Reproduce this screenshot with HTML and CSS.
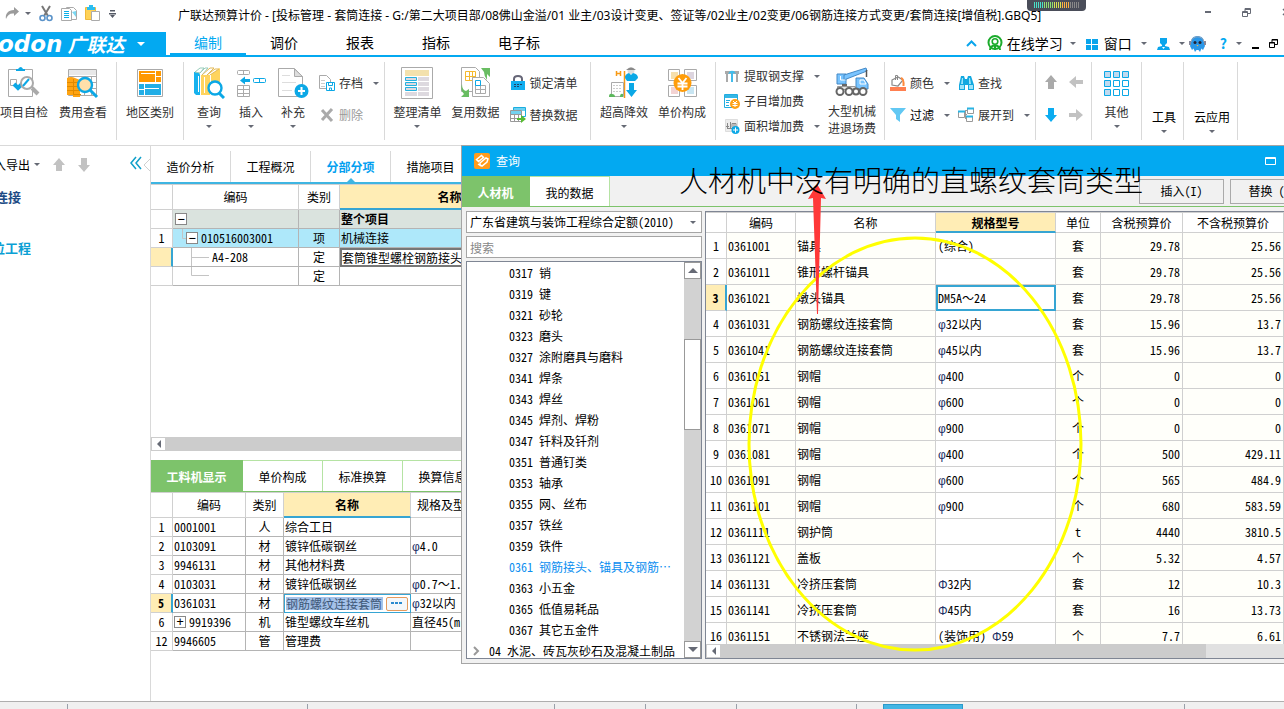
FILE: index.html
```html
<!DOCTYPE html>
<html lang="zh-CN">
<head>
<meta charset="utf-8">
<title>广联达预算计价</title>
<link rel="stylesheet" href="styles.css">
</head>
<body>
<div class="app">
<header class="titlebar">
  <div class="quick">
    <button class="icon-btn" aria-label="重做"><svg width="15" height="13" viewBox="0 0 15 13"><path d="M9 0l5 4.500-5 4.500V6.500C5 6 2.500 8 1 12 0 7 3 3 9 3z" fill="#9b9b9b"/></svg></button>
    <span class="caret"></span>
    <button class="icon-btn" aria-label="剪切"><svg width="14" height="17" viewBox="0 0 14 17" fill="none"><path d="M3 1l6 10M11 1L5 11" stroke="#777" stroke-width="2"/><circle cx="3.500" cy="13" r="2.500" stroke="#5b93c9" stroke-width="1.600"/><circle cx="10.500" cy="13" r="2.500" stroke="#5b93c9" stroke-width="1.600"/></svg></button>
    <button class="icon-btn" aria-label="复制"><svg width="16" height="16" viewBox="0 0 16 16" fill="none"><path d="M5.500 1.500h7l3 3v9h-10z" fill="#fff" stroke="#aaa"/><path d="M11 6l4 5V5z" fill="#7bd8f2"/><path d="M.5 2.500h8l2 2v10H.5z" fill="#fff" stroke="#aaa"/><path d="M3 5.500h5M3 7.500h5M3 9.500h5M3 11.500h5" stroke="#0bb0e8"/></svg></button>
    <button class="icon-btn" aria-label="粘贴"><svg width="16" height="17" viewBox="0 0 16 17"><path d="M.5 2.500h10v12H.5z" fill="#ffd257" stroke="#f0b93a"/><path d="M2 2h2V0h4v2h2v3H2z" fill="#2bbdf0"/><path d="M6.500 6.500h8v9h-8z" fill="#fff" stroke="#aaa"/></svg></button>
    <button class="icon-btn" aria-label="自定义"><svg width="7" height="8" viewBox="0 0 7 8"><path d="M1 0h5v1.500H1zM0 3h7v1.500H0zM1 5h5L3.500 8z" fill="#555a66"/></svg></button>
  </div>
  <h1 class="title">广联达预算计价 - [投标管理 - 套筒连接 - G:/第二大项目部/08佛山金溢/01 业主/03设计变更、签证等/02业主/02变更/06钢筋连接方式变更/套筒连接[增值税].GBQ5]</h1>
  <div class="win-controls">
    <button class="icon-btn" aria-label="最小化"><svg width="6" height="2"><path d="M0 0h6v2H0z" fill="#666a75"/></svg></button>
    <button class="icon-btn" aria-label="还原"><svg width="9" height="9" fill="none" stroke="#666a75"><path d="M.5 3.500h5v5h-5zM.5 4.500h5M3 3V.5h5.500v5H6M3 1.500h5"/></svg></button>
    <button class="icon-btn" aria-label="关闭"><svg width="8" height="8" fill="none" stroke="#666a75" stroke-width="1.500"><path d="M1 1l6 6M7 1L1 7"/></svg></button>
  </div>
  <div class="recorder"><svg width="46" height="6" fill="none" stroke-width="6" stroke-dasharray="1 1"><path d="M0 3h10" stroke="#48e0c8"/><path d="M10 3h10" stroke="#8fe070"/><path d="M20 3h8" stroke="#d8e050"/><path d="M28 3h8" stroke="#ffb040"/><path d="M36 3h10" stroke="#888"/></svg></div>
</header>

<nav class="menubar">
  <button class="logo"><span class="logo-en">odon</span><span class="logo-cn">广联达</span><span class="caret caret-light"></span></button>
  <a class="menu active" href="#">编制</a><a class="menu" href="#">调价</a><a class="menu" href="#">报表</a><a class="menu" href="#">指标</a><a class="menu menu-wide" href="#">电子标</a>
  <div class="menu-tools">
    <button class="icon-btn" aria-label="收起"><svg width="11" height="7" fill="none" stroke="#0aa5ec" stroke-width="2"><path d="M1 6l4.500-4.500L10 6"/></svg></button>
    <button class="tool online"><svg width="16" height="17" viewBox="0 0 16 17" fill="none" stroke="#1bab2c"><circle cx="8" cy="7.500" r="6.500" stroke-width="2"/><circle cx="8" cy="6.500" r="2.800" stroke-width="1.600"/><path d="M3 15c0-6 10-6 10 0M8 11v4" stroke-width="2"/></svg>在线学习<span class="caret"></span></button>
    <button class="tool"><svg width="12" height="12" fill="#0aa5ec"><path d="M0 1h5v5H0zM6 1h6v5H6zM0 7h5v5H0zM6 7h6v5H6z"/></svg>窗口<span class="caret"></span></button>
    <button class="tool" aria-label="用户"><svg width="13" height="12" viewBox="0 0 13 12" fill="#0aa5ec"><path d="M3 0h7v5L8 7v1l4 1 1 3H0l1-3 4-1V7L3 5z"/><path d="M5 9l1.500 2L8 9z" fill="#fff"/></svg><span class="caret"></span></button>
    <button class="icon-btn helper" aria-label="助手"><svg width="17" height="16" viewBox="0 0 17 16"><path d="M2 6C2-2 15-2 15 6l1 4-2 4-1.500-1.500L11 16l-1.500-2h-2L6 16l-1.500-3.500L3 14l-2-4z" fill="#2a97e8"/><path d="M2 6C3-1 14-1 15 6" fill="none" stroke="#99a4b5"/><path d="M0 5h2v4H0zM15 5h2v4h-2z" fill="#889"/><circle cx="6" cy="6.500" r="1.500" fill="#223"/><circle cx="11" cy="6.500" r="1.500" fill="#223"/><path d="M7.500 9h2l-1 1.500z" fill="#fb4"/></svg></button>
    <button class="tool help">?<span class="caret"></span></button>
    <button class="icon-btn low" aria-label="最小化文档"><svg width="7" height="2"><path d="M0 0h7v2H0z"/></svg></button>
    <button class="icon-btn" aria-label="还原文档"><svg width="9" height="9" fill="none" stroke="#000"><path d="M.5 3.500h5v5h-5zM0 4h6M3 3V.5h5.500v5H6M3 1h6"/></svg></button>
  </div>
</nav>

<section class="ribbon" aria-label="工具栏">
  <div class="group g-check">
    <button class="big"><svg width="32" height="32" viewBox="0 0 32 32" fill="none"><path d="M0.500 2.500h24v27h-24z" fill="#fff" stroke="#aaa"/><path d="M8 4V2h2q3-4 5 0h2v2z" fill="#0ba8e6"/><path d="M2.500 12.500h6v6h-6z" stroke="#aaa"/><path d="M6 17l4 4 5-5" stroke="#0ba8e6" stroke-width="4"/><circle cx="19" cy="16" r="6" stroke="#aaa" stroke-width="2" fill="#fff"/><path d="M15 19l6-7" stroke="#0ba8e6" stroke-width="2"/><path d="M24 21l6 6" stroke="#aaa" stroke-width="4"/></svg>项目自检</button>
    <button class="big"><svg width="32" height="32" viewBox="0 0 32 32" fill="none"><path d="M1.500 2.500h28v26h-28zM2 9.500h28M2 15.500h28M2 21.500h28M17.500 10v18M24.500 10v18" stroke="#aaa" fill="#fff"/><path d="M2 3h27v5H2z" fill="#e8e8e8"/><path d="M0 11q4-2 8 0l5 2v17H6v-2H0z" fill="#ffa412"/><path d="M0 15.500h12M0 19.500h12M0 23.500h12M6 27.500h8M6.500 12v15" stroke="#e08a00"/><circle cx="18" cy="18" r="7" fill="#ffe0aa" stroke="#0ba8e6" stroke-width="2.400"/><path d="M23 23l7 7" stroke="#0ba8e6" stroke-width="3"/></svg>费用查看</button>
  </div>
  <div class="group g-area">
    <button class="big"><svg width="32" height="32" viewBox="0 0 32 32" fill="none"><path d="M3.500 2.500h25v27h-25z" stroke="#aaa"/><path d="M5 4h22v11H5z" fill="#ff9800"/><path d="M7 6.500h14M21.500 4v11M22 9.500h5" stroke="#fff"/><path d="M5 17h22v11H5z" fill="#22aee6"/><path d="M10 21.500h15M10.500 17v11M5 22.500h5" stroke="#fff"/></svg>地区类别</button>
  </div>
  <div class="group g-edit">
    <button class="big"><svg width="32" height="32" viewBox="0 0 32 32" fill="none"><path d="M1 4l4-3h13v20l-4 7H1z" fill="#fff"/><path d="M1 5h6v23H3l-2-2z" fill="#17b2ee"/><path d="M2 5l5-4h4L7 6zM6 7l6-6h3L9 8" fill="#fff" stroke="#9cb" /><path d="M8 8h9l10-7v21l-10 6H8z" fill="#ffd45e"/><path d="M9 8l8-7h4l-7 7M14 8l8-6h4l-9 6" fill="#fff" stroke="#e3b956"/><path d="M5.500 9v16M11.500 10v16M17.500 8v20" stroke="#fff"/><circle cx="22" cy="21" r="6.500" stroke="#0ba8e6" stroke-width="2.400" fill="#fff"/><path d="M26 26l5 5" stroke="#0ba8e6" stroke-width="3"/></svg>查询<span class="caret"></span></button>
    <button class="big"><svg width="32" height="32" viewBox="0 0 32 32" fill="none" stroke="#aaa"><rect x="2.500" y="3.500" width="12" height="4" rx="1"/><path d="M8.500 3v5"/><path d="M2.500 18.500h12v11h-12zM2 22.500h13M2 26.500h13M8.500 18v12"/><rect x="18.500" y="11.500" width="12" height="4" rx="1" stroke="#0ba8e6"/><path d="M24.500 11v5" stroke="#0ba8e6"/><path d="M5 13.500l5-4v2.500h5v3h-5v2.500z" fill="#0ba8e6" stroke="none"/></svg>插入<span class="caret"></span></button>
    <button class="big"><svg width="32" height="32" viewBox="0 0 32 32" fill="none"><path d="M1.500 1.500h16l8 8v20h-24z" fill="#fff" stroke="#aaa"/><path d="M17.500 2v7.500h8z" fill="#ddd" stroke="#aaa"/><path d="M5 8.500h8M5 15.500h14M5 23.500h10" stroke="#ddd"/><circle cx="24.500" cy="24" r="7" fill="#0ba8e6"/><path d="M21 24h7M24.500 20v8" stroke="#fff" stroke-width="2"/></svg>补充<span class="caret"></span></button>
    <div class="stack">
      <button class="small"><svg width="16" height="16" viewBox="0 0 16 16" fill="none"><path d="M.5.5h7l4 4v9H.5z" stroke="#aaa"/><path d="M2 5.500h4M2 8.500h4M2 11.500h4" stroke="#ccc"/><path d="M7.500 7.500h8v8h-8z" fill="#fff" stroke="#0ba8e6"/><path d="M9.500 8v2.500h4V8M10.500 15v-2h2v2" stroke="#0ba8e6"/></svg>存档<span class="caret"></span></button>
      <button class="small muted"><svg width="16" height="16" viewBox="0 0 16 16" fill="none" stroke="#aaa" stroke-width="3"><path d="M3 3l10 11M13 2L3 13"/></svg>删除</button>
    </div>
  </div>
  <div class="group g-data">
    <button class="big"><svg width="32" height="32" viewBox="0 0 32 32" fill="none"><path d="M.5.5h31v31H.5z" stroke="#aaa"/><path d="M4 3h24v6H4z" fill="#f3e1ad"/><path d="M17 10h11v4H17zM17 15h11v4H17zM17 20h11v4H17zM17 25h11v4H17z" fill="#ddd9df"/><path d="M4.500 10.500h11v3h-11zM4.500 15.500h11v3h-11zM4.500 20.500h11v3h-11z" stroke="#25b1df" fill="#ddd9df"/><path d="M4 25h12v4H4z" fill="#ddd9df"/></svg>整理清单<span class="caret"></span></button>
    <button class="big"><svg width="32" height="32" viewBox="0 0 32 32" fill="none"><path d="M2.500.5h14l4 4v20h-18z" stroke="#aaa" fill="#fff"/><path d="M6.500 4.500h10v9h-10zM6 9.500h11M10.500 4v9M13.500 4v9" stroke="#f5b92e"/><path d="M13.500 10.500h11l6 6v13h-17z" fill="#fff" stroke="#aaa"/><path d="M16.500 18.500h10v8h-10zM21.500 14v12M16 22.500h11" stroke="#aaa"/><path d="M16.500 13.500h5v5h-5z" stroke="#0ba8e6"/><path d="M22 1h9v9l-3-3v6q-3-4-3-8z" fill="#69bd62"/><path d="M3 17q0 6 4 7l3-2v8H2l3-3q-4-4-2-10z" fill="#69bd62"/></svg>复用数据</button>
    <div class="stack">
      <button class="small"><svg width="16" height="16" viewBox="0 0 16 16" fill="none"><path d="M4 7V4q0-3 4-3t4 3v3" stroke="#667" stroke-width="2"/><path d="M1 6h14v9H1z" fill="#11aef0"/><path d="M4 9h2v1H4zM7 9h2v1H7zM10 9h2v1h-2zM4 11h2v1H4zM7 11h2v1H7z" fill="#246"/></svg>锁定清单</button>
      <button class="small"><svg width="16" height="16" viewBox="0 0 16 16" fill="none"><path d="M3.500.5h12v9h-12z" fill="#fff" stroke="#1badde"/><path d="M4 1h11v3H4z" fill="#6bd1f2"/><path d="M.5 3.500h11v11H.5z" fill="#fff" stroke="#999"/><path d="M0 7.500h12M0 11.500h12M4.500 4v11M8.500 4v11" stroke="#999"/><path d="M1 4h10v3H1z" fill="#74d3f0"/><path d="M7 11h4V8l5 4-5 4v-3H7z" fill="#58bb33"/></svg>替换数据</button>
    </div>
  </div>
  <div class="group g-price">
    <button class="big"><svg width="32" height="32" viewBox="0 0 32 32" fill="none"><path d="M8.500 4v5M12.500 4v5M8 6.500h4M16.500 4v27M16 9.500h4" stroke="#f79a16" stroke-width="1.500"/><path d="M3.500 15.500h12v14h-12z" stroke="#aaa"/><path d="M5 18.500h9M5 21.500h9M5 24.500h9" stroke="#ccc" stroke-dasharray="2 1"/><path d="M1 30q0-4 3-3 3 0 3 3zM12 30q0-4 3-3v3z" fill="#5cb85c"/><circle cx="23" cy="3.500" r="3.500" fill="#ddd"/><path d="M18 3q5-5 10 0z" fill="#888"/><path d="M17 11q0-4 4-5l2 2 2-2q5 1 5 5l-3 3h-8z" fill="#0ba8e6"/><path d="M21 16h5v7h3l-5.500 7-5.500-7h3z" fill="#0ba8e6"/></svg>超高降效<span class="caret"></span></button>
    <button class="big"><svg width="32" height="32" viewBox="0 0 32 32" fill="none" stroke="#aaa"><path d="M2.500 2.500h11v11h-11zM18.500 2.500h12v11h-12zM2.500 18.500h11v11h-11zM18.500 18.500h12v11h-12z"/><g stroke="none"><path d="M5 5h7v7H5z" fill="#f6dfac"/><path d="M21 5h7v7h-7z" fill="#ddd5df"/><path d="M5 20h7v7H5z" fill="#f3d3d3"/><path d="M21 20h7v7h-7z" fill="#c8e5f2"/><circle cx="16.500" cy="16" r="9" fill="#ff9d0a"/></g><path d="M12.500 11l4 5 4-5M11.500 16.500h10M11.500 19.500h10M16.500 16v7" stroke="#fff" stroke-width="1.800"/></svg>单价构成</button>
  </div>
  <div class="group g-fee">
    <div class="stack tight">
      <button class="small"><svg width="16" height="16" viewBox="0 0 16 16"><path d="M1 3h14v3H1zM2 6h2v8H2zM12 6h2v8h-2z" fill="#aaa"/><path d="M4 6q2-4 4-3 2-1 4 3l-3-1v9H7V5z" fill="#42bceb"/></svg>提取钢支撑<span class="caret"></span></button>
      <button class="small"><svg width="16" height="16" viewBox="0 0 16 16" fill="none"><path d="M.5 1.500h13v13H.5z" fill="#fff" stroke="#22ade0"/><path d="M1 2h12v3H1z" fill="#35b7e5"/><path d="M2 7.500h4M2 9.500h3M2 12.500h3" stroke="#22ade0"/><circle cx="11" cy="11" r="5" fill="#ffa217"/><path d="M9 8l2 2 2-2M8.500 10.500h5M8.500 12.500h5M11 10v4" stroke="#fff"/></svg>子目增加费</button>
      <button class="small"><svg width="16" height="16" viewBox="0 0 16 16" fill="none"><path d="M1.500 1.500h12v12h-12z" fill="#ececec" stroke="#ddd"/><path d="M2 8.500h3M3.500 5v5M6.500 4v7M8 5.500h4v4H8zM10 5v5M3 10.500h8" stroke="#888"/><circle cx="11.500" cy="12" r="4" fill="#0ba8e6"/><path d="M9 12h5M11.500 9.500v5" stroke="#fff"/></svg>面积增加费<span class="caret"></span></button>
    </div>
    <button class="big tall"><svg width="34" height="32" viewBox="0 0 34 32" fill="none"><path d="M2 7h9v10H2zM21 11h8l4 6v5H21z" fill="#79c4ff" stroke="#4489c6"/><path d="M9 8l22-7 1 3-18 7-5 2z" fill="#79c4ff" stroke="#4489c6"/><path d="M5.500 9v4h5M25 13h4l2 4h-6z" stroke="#fff"/><path d="M31.500 3v7" stroke="#555" stroke-width="1.500"/><path d="M7 17h5v2H7z" fill="#666"/><path d="M2.500 19.500h18v3h-18z" fill="#e5e5e5" stroke="#999"/><g fill="#fff" stroke="#666" stroke-width="2"><circle cx="5" cy="24.500" r="3.500"/><circle cx="14" cy="24.500" r="3.500"/><circle cx="21" cy="24.500" r="3"/><circle cx="28" cy="24.500" r="3.500"/></g></svg>大型机械<br>进退场费</button>
  </div>
  <div class="group g-view">
    <div class="stack">
      <button class="small"><svg width="16" height="16" viewBox="0 0 16 16" fill="none"><path d="M2 5l6-3 5 3-5 6-6-1z" fill="#fff" stroke="#888" stroke-width="1.200"/><path d="M5.500 5V.5h2V5" stroke="#888"/><path d="M11 3q3 1 2.500 8" stroke="#ff8a3c" stroke-width="2"/><path d="M0 12h16v4H0z" fill="#ff7f50"/></svg>颜色<span class="caret"></span></button>
      <button class="small dark"><svg width="16" height="16" viewBox="0 0 16 16"><path d="M0 1h16L10 8v7l-4-3V8z" fill="#62c8f3"/></svg>过滤<span class="caret"></span></button>
    </div>
    <div class="stack">
      <button class="small"><svg width="16" height="16" viewBox="0 0 16 16"><path d="M3 1h3l1 3h2l1-3h3l3 9v5h-6v-5H7v5H1v-5z" fill="#11a8e0"/><path d="M2 10h4v4H2zM11 10h4v4h-4zM4 3h1v6H3zM11 3h1l1 6h-2z" fill="#9be3fa"/></svg>查找</button>
      <button class="small"><svg width="16" height="16" viewBox="0 0 16 16" fill="#fff" stroke="#999"><path d="M6 7.500h3M7.500 3v9M8 3.500h2M8 12.500h2" fill="none"/><path d="M.5 4.500h6v6h-6zM9.500 1.500h6v5h-6zM8.500 9.500h6v5h-6z"/><path d="M0 4.500h7M9 1.500h7M8 9.500h7" stroke="#28b4e4" stroke-width="2"/></svg>展开到<span class="caret"></span></button>
    </div>
  </div>
  <div class="group g-move">
    <button class="icon-btn" aria-label="上移"><svg width="14" height="16"><path d="M7 1l6 7H10v7H4V8H1z" fill="#aaa"/></svg></button>
    <button class="icon-btn" aria-label="左移"><svg width="16" height="14"><path d="M1 7l7-6v4h7v4H8v4z" fill="#c2c2c2"/></svg></button>
    <button class="icon-btn" aria-label="下移"><svg width="14" height="16"><path d="M7 15L1 8h3V1h6v7h3z" fill="#0bacf0"/></svg></button>
    <button class="icon-btn" aria-label="右移"><svg width="16" height="14"><path d="M15 7L8 1v4H1v4h7v4z" fill="#c2c2c2"/></svg></button>
  </div>
  <div class="group g-other">
    <button class="big"><svg width="32" height="32" viewBox="0 0 32 32" fill="#fff" stroke="#0ba8e6"><g fill="#c0daef"><path d="M3.500 4.500h6v6h-6zM12.500 4.500h6v6h-6zM21.500 4.500h6v6h-6zM3.500 13.500h6v6h-6zM3.500 22.500h6v6h-6z"/></g><path d="M12.500 13.500h6v6h-6zM21.500 13.500h6v6h-6zM12.500 22.500h6v6h-6zM21.500 22.500h6v6h-6z"/></svg>其他<span class="caret"></span></button>
  </div>
  <div class="group g-tool"><button class="big">工具<span class="caret"></span></button></div>
  <div class="group g-cloud"><button class="big">云应用<span class="caret"></span></button></div>
</section>

<main class="workspace">
  <aside class="side">
    <div class="side-tools">
      <button class="clip-text">入导出</button><span class="caret"></span>
      <button class="icon-btn" aria-label="上移"><svg width="12" height="14"><path d="M6 0l6 7H9v6H3V7H0z" fill="#c2c2c2"/></svg></button>
      <button class="icon-btn" aria-label="下移"><svg width="12" height="14"><path d="M6 14L0 7h3V0h6v7h3z" fill="#c2c2c2"/></svg></button>
      <button class="icon-btn collapse" aria-label="折叠"><svg width="12" height="14" fill="none" stroke="#109fc9" stroke-width="1.500"><path d="M6 1L1 7l5 6M11 1L6 7l5 6"/></svg></button>
      <svg width="7" height="14" fill="#fff" stroke="#d0d0d0"><path d="M7 1L1 7l6 6"/></svg>
    </div>
    <a class="side-link" href="#">连接</a>
    <a class="side-link unit" href="#">位工程</a>
  </aside>
  <section class="center">
    <nav class="tabs">
      <button class="tab">造价分析</button><button class="tab">工程概况</button><button class="tab on">分部分项</button><button class="tab">措施项目</button>
    </nav>
    <table class="grid items">
      <colgroup><col class="w22"><col class="w126"><col class="w41"><col class="w220"><col></colgroup>
      <thead><tr><th></th><th>编码</th><th>类别</th><th class="hot">名称</th><th></th></tr></thead>
      <tbody>
        <tr class="root"><td></td><td><div class="node"><button class="toggle lv0" aria-label="折叠">−</button></div></td><td></td><td><b>整个项目</b></td><td></td></tr>
        <tr class="picked"><td class="c">1</td><td><div class="node"><svg width="13" height="18" fill="none" stroke="#c4c4c4"><path d="M9.500 0v9.500H13"/></svg><button class="toggle" aria-label="折叠">−</button><span>010516003001</span></div></td><td class="c">项</td><td>机械连接</td><td></td></tr>
        <tr><td class="mark"></td><td><div class="node"><svg width="36" height="19" fill="none" stroke="#c4c4c4"><path d="M18.500 0v19M18 9.500h18"/></svg><span>A4-208</span></div></td><td class="c">定</td><td class="focus">套筒锥型螺栓钢筋接头</td><td></td></tr>
        <tr><td></td><td><div class="node"><svg width="38" height="19" fill="none" stroke="#c4c4c4"><path d="M18.500 0v8.500H36"/></svg></div></td><td class="c">定</td><td></td><td></td></tr>
      </tbody>
    </table>
    <div class="hscroll main-scroll"><button class="arrow left" aria-label="向左"></button><div class="thumb"></div></div>
    <nav class="tabs green">
      <button class="tab on">工料机显示</button><button class="tab">单价构成</button><button class="tab">标准换算</button><button class="tab">换算信息</button>
    </nav>
    <table class="grid parts">
      <colgroup><col class="w22"><col class="w73"><col class="w38"><col class="w127"><col class="w73"><col></colgroup>
      <thead><tr><th></th><th>编码</th><th>类别</th><th class="hot">名称</th><th>规格及型号</th><th></th></tr></thead>
      <tbody>
        <tr><td class="c">1</td><td>0001001</td><td class="c">人</td><td>综合工日</td><td></td><td></td></tr>
        <tr><td class="c">2</td><td>0103091</td><td class="c">材</td><td>镀锌低碳钢丝</td><td><i>φ</i>4.0</td><td></td></tr>
        <tr><td class="c">3</td><td>9946131</td><td class="c">材</td><td>其他材料费</td><td></td><td></td></tr>
        <tr><td class="c">4</td><td>0103031</td><td class="c">材</td><td>镀锌低碳钢丝</td><td><i>φ</i>0.7～1.</td><td></td></tr>
        <tr><td class="mark c">5</td><td>0361031</td><td class="c">材</td><td class="editing"><div class="editor"><input value="钢筋螺纹连接套筒" aria-label="名称"><button aria-label="选择"><svg width="12" height="3" fill="#2a8ad0"><path d="M0 0h3v2H0zM4 0h3v2H4zM8 0h3v2H8z"/></svg></button></div></td><td><i>φ</i>32以内</td><td></td></tr>
        <tr><td class="c">6</td><td><div class="node"><button class="toggle" aria-label="展开">+</button><span>9919396</span></div></td><td class="c">机</td><td>锥型螺纹车丝机</td><td>直径45(m</td><td></td></tr>
        <tr><td class="c">12</td><td>9946605</td><td class="c">管</td><td>管理费</td><td></td><td></td></tr>
      </tbody>
    </table>
  </section>
</main>
<footer class="status"><span class="s1"></span><span class="s2"></span><span class="s3"></span><span class="s4"></span><span class="s4"></span><span class="s5"></span><button aria-label="当前视图"></button><span class="s6"></span></footer>

<section class="dialog" role="dialog" aria-label="查询">
  <header class="dialog-title"><svg width="16" height="16" viewBox="0 0 16 16" fill="none"><rect width="16" height="16" rx="2" fill="#ff9c1c"/><path d="M2.500 6.500l5-4 2 2-5 4zM6 10l6-5 2 1-1 3-5 4-2-1zM4 11l3 2" stroke="#fff" stroke-width="1.500"/></svg><h2>查询</h2><button class="icon-btn" aria-label="最大化"><svg width="11" height="8" fill="none" stroke="#fff"><path d="M.5.5h10v7H.5zM0 1.500h11"/></svg></button></header>
  <div class="dialog-bar">
    <nav class="tabs green"><button class="tab on">人材机</button><button class="tab">我的数据</button></nav>
    <button class="push">插入(I)</button><button class="push">替换 (R)</button>
  </div>
  <div class="dialog-body">
    <div class="finder">
      <div class="combo"><select aria-label="定额库"><option>广东省建筑与装饰工程综合定额(2010)</option></select><span class="caret"></span></div>
      <input class="search" placeholder="搜索" aria-label="搜索">
      <div class="tree">
        <ul>
          <li>0317 销</li><li>0319 键</li><li>0321 砂轮</li><li>0323 磨头</li><li>0327 涂附磨具与磨料</li><li>0341 焊条</li><li>0343 焊丝</li><li>0345 焊剂、焊粉</li><li>0347 钎料及钎剂</li><li>0351 普通钉类</li><li>0353 轴承</li><li>0355 网、丝布</li><li>0357 铁丝</li><li>0359 铁件</li><li class="cur">0361 钢筋接头、锚具及钢筋…</li><li>0363 小五金</li><li>0365 低值易耗品</li><li>0367 其它五金件</li>
          <li class="parent"><svg width="7" height="10" fill="none" stroke="#999" stroke-width="2"><path d="M1 1l4 4-4 4"/></svg>04 水泥、砖瓦灰砂石及混凝土制品</li>
        </ul>
        <div class="vscroll"><button class="arrow up" aria-label="向上"></button><div class="track"><div class="vthumb"></div></div><button class="arrow down" aria-label="向下"></button></div>
      </div>
    </div>
    <div class="results">
      <div class="rows">
      <table class="grid result">
        <colgroup><col class="w21"><col class="w69"><col class="w140"><col class="w120"><col class="w45"><col class="w82"><col></colgroup>
        <thead><tr><th></th><th>编码</th><th>名称</th><th class="hot">规格型号</th><th>单位</th><th>含税预算价</th><th>不含税预算价</th></tr></thead>
        <tbody>
          <tr><td>1</td><td>0361001</td><td>锚具</td><td>(综合)</td><td>套</td><td>29.78</td><td>25.56</td></tr>
          <tr><td>2</td><td>0361011</td><td>锥形螺杆锚具</td><td></td><td>套</td><td>29.78</td><td>25.56</td></tr>
          <tr><td class="mark">3</td><td>0361021</td><td>墩头锚具</td><td class="chosen">DM5A～24</td><td>套</td><td>29.78</td><td>25.56</td></tr>
          <tr><td>4</td><td>0361031</td><td>钢筋螺纹连接套筒</td><td><i>φ</i>32以内</td><td>套</td><td>15.96</td><td>13.7</td></tr>
          <tr><td>5</td><td>0361041</td><td>钢筋螺纹连接套筒</td><td><i>φ</i>45以内</td><td>套</td><td>15.96</td><td>13.7</td></tr>
          <tr><td>6</td><td>0361051</td><td>钢帽</td><td><i>φ</i>400</td><td>个</td><td>0</td><td>0</td></tr>
          <tr><td>7</td><td>0361061</td><td>钢帽</td><td><i>φ</i>600</td><td>个</td><td>0</td><td>0</td></tr>
          <tr><td>8</td><td>0361071</td><td>钢帽</td><td><i>φ</i>900</td><td>个</td><td>0</td><td>0</td></tr>
          <tr><td>9</td><td>0361081</td><td>钢帽</td><td><i>φ</i>400</td><td>个</td><td>500</td><td>429.11</td></tr>
          <tr><td>10</td><td>0361091</td><td>钢帽</td><td><i>φ</i>600</td><td>个</td><td>565</td><td>484.9</td></tr>
          <tr><td>11</td><td>0361101</td><td>钢帽</td><td><i>φ</i>900</td><td>个</td><td>680</td><td>583.59</td></tr>
          <tr><td>12</td><td>0361111</td><td>钢护筒</td><td></td><td>t</td><td>4440</td><td>3810.5</td></tr>
          <tr><td>13</td><td>0361121</td><td>盖板</td><td></td><td>个</td><td>5.32</td><td>4.57</td></tr>
          <tr><td>14</td><td>0361131</td><td>冷挤压套筒</td><td><i>Φ</i>32内</td><td>套</td><td>12</td><td>10.3</td></tr>
          <tr><td>15</td><td>0361141</td><td>冷挤压套筒</td><td><i>Φ</i>45内</td><td>套</td><td>16</td><td>13.73</td></tr>
          <tr><td>16</td><td>0361151</td><td>不锈钢法兰座</td><td>(装饰用) <i>Φ</i>59</td><td>个</td><td>7.7</td><td>6.61</td></tr>
        </tbody>
      </table>
      </div>
      <div class="hscroll"><button class="arrow left" aria-label="向左"></button><div class="thumb part"></div></div>
    </div>
  </div>
</section>

<svg class="marks" width="340" height="480" viewBox="0 0 340 480" fill="none"><ellipse cx="170" cy="264" rx="166" ry="206" stroke="#ff0" stroke-width="3"/><path d="M72 4l9 15-5-1-3 116-1 0-4-116-5 1z" fill="#ff3838"/></svg>
<p class="note">人材机中没有明确的直螺纹套筒类型</p>
</div>
</body>
</html>
```
FILE: styles.css
```css
* { box-sizing: border-box; }
body { margin: 0; background: #fff; color: #000; font: 12px/18px "Noto Sans Mono CJK SC", "Noto Sans CJK SC", sans-serif; }
button, input, select { font: inherit; color: inherit; border: 0; padding: 0; margin: 0; background: none; }
button { white-space: nowrap; }
a { color: inherit; text-decoration: none; }
h1, h2, p, ul { margin: 0; padding: 0; font-weight: 400; }
svg { display: block; flex: none; }
i { font: 12px "Liberation Sans", sans-serif; color: #1c2f66; }
.app { position: relative; min-height: 100vh; display: flex; flex-direction: column; overflow: hidden; }
.icon-btn { display: flex; align-items: center; justify-content: center; flex: none; }
.caret { display: inline-block; flex: none; border: 3px solid transparent; border-top-color: #666a75; border-bottom: 0; }
.caret-light { border-width: 4px 4px 0; border-top-color: #fff; }

.titlebar { position: relative; height: 32px; display: flex; align-items: center; font-family: "Noto Sans", "Noto Sans CJK SC", sans-serif; }
.quick { display: flex; align-items: center; gap: 8px; width: 178px; padding: 0 0 5px 5px; flex: none; }
.quick .caret { margin-left: -3px; }
.title { font-size: 12px; flex: none; }
.win-controls { display: flex; align-items: center; gap: 31px; margin-left: auto; margin-right: -6px; padding-bottom: 8px; flex: none; }
.recorder { position: absolute; left: 1027px; top: 0; width: 59px; height: 11px; border-radius: 0 0 4px 4px; background: #4a4d59; padding: 2px 7px; }

.menubar { display: flex; height: 25px; border-bottom: 2px solid #03a9f1; font: 14px/21px "Noto Sans CJK SC", sans-serif; }
.logo { display: flex; align-items: center; width: 166px; background: #03a9f1; color: #fff; overflow: hidden; flex: none; margin-right: 4px; }
.logo-en { font: italic 700 23px/22px "DejaVu Sans", sans-serif; margin-left: -2px; }
.logo-cn { font: italic 700 19px/22px "Noto Sans CJK SC", sans-serif; margin: 0 13px 0 5px; }
.menu { width: 76px; text-align: center; flex: none; }
.menu-wide { width: 90px; }
.menu.active { color: #03a9f1; border-bottom: 2px solid #03a9f1; }
.menu-tools { display: flex; align-items: center; gap: 10px; margin-left: auto; padding-right: 6px; flex: none; }
.tool { display: flex; align-items: center; gap: 6px; }
.tool .caret { margin-left: 3px; }
.online { gap: 4px; }
.helper { margin: 0 4px 0 -6px; }
.help { color: #03a9f1; font-weight: 700; }
.low { padding-top: 8px; }

.ribbon { display: flex; height: 89px; padding: 5px 0 5px; border-bottom: 1px solid #d9d9d9; font-family: "Noto Sans CJK SC", sans-serif; color: #333; }
.group { display: flex; justify-content: center; gap: 11px; flex: none; border-right: 1px solid #d9d9d9; padding-top: 5px; }
.big { display: flex; flex-direction: column; align-items: center; gap: 4px; line-height: 17px; align-self: flex-start; }
.big .caret { margin-top: 1px; }
.stack { display: flex; flex-direction: column; gap: 14px; padding-top: 7px; }
.tight { gap: 7px; padding-top: 0; }
.small { display: flex; align-items: center; gap: 4px; line-height: 18px; }
.small .caret { margin-left: 6px; }
.muted { color: #999; }
.dark { color: #000; }
.g-check { width: 117px; justify-content: flex-start; }
.g-area { width: 67px; }
.g-edit { width: 201px; padding-left: 4px; gap: 10px; }
.g-data { width: 206px; padding-right: 4px; gap: 10px; }
.g-price { width: 125px; gap: 10px; }
.g-fee { width: 169px; gap: 8px; }
.tall { gap: 3px; }
.g-view { width: 151px; gap: 8px; }
.g-move { width: 56px; display: grid; grid-template-columns: 16px 16px; gap: 17px 9px; align-content: start; padding-top: 12px; }
.g-other { width: 50px; }
.g-tool { width: 42px; padding: 46px 0 0 3px; color: #000; }
.g-cloud { width: 54px; padding: 46px 0 0 3px; color: #000; }

.workspace { display: flex; flex: 1; }
.side { width: 151px; border-right: 1px solid #d9d9d9; flex: none; }
.side-tools { display: flex; align-items: center; height: 37px; gap: 4px; }
.side-tools .icon-btn { margin-left: 9px; }
.side-tools .collapse { margin: 0 -3px 4px auto; }
.clip-text { width: 30px; display: flex; justify-content: flex-end; overflow: hidden; }
.side-link { width: 21px; display: flex; justify-content: flex-end; overflow: hidden; white-space: nowrap; font: 700 13px/27px "Noto Sans CJK SC", sans-serif; color: #1d4b85; margin-bottom: 24px; }
.side-link.unit { width: 31px; color: #0ba0d4; }
.center { flex: 1; min-width: 0; overflow: hidden; }
.tabs { display: flex; height: 38px; padding-top: 5px; border-bottom: 2px solid #3eb5e2; }
.tab { width: 80px; border-right: 1px solid #d9d9d9; flex: none; }
.tab.on { position: relative; color: #03a0f0; font-weight: 700; }
.center > .tabs:not(.green) .on::after { content: ""; position: absolute; left: 36px; bottom: 0; border: 4px solid transparent; border-bottom-color: #3eb5e2; border-top: 0; }
.tabs.green { height: 32px; padding: 0; border-bottom: 1px solid #7dc36b; margin-top: 9px; }
.green .tab { border-top: 1px solid #b5e3a3; border-right-color: #b5e3a3; padding-top: 2px; }
.green .tab.on { background: #7dc36b; border-color: #7dc36b; color: #fff; width: 92px; }

.grid { width: 100%; table-layout: fixed; border-collapse: separate; border-spacing: 0; border-top: 1px solid #d0d0d0; }
.grid th, .grid td { padding: 0 0 0 1px; border-right: 1px solid #b4b4b4; border-bottom: 1px solid #b4b4b4; white-space: nowrap; overflow: hidden; text-align: left; line-height: 16px; height: 19px; }
.grid th { height: 25px; text-align: center; font-weight: 400; border-color: #d0d0d0; padding: 0; }
.grid th.hot { background: #ffedb5; font-weight: 700; border-bottom: 2px solid #36a5d3; }
.grid td.c { text-align: center; padding: 0; }
.grid td:first-child { background: #fff; border-color: #d0d0d0; }
.grid td.mark { background: #ffedb5; border-right: 2px solid #36a5d3; font-weight: 700; }
.grid .root td:nth-child(n+2) { background: #dae3de; }
.grid .picked td:nth-child(n+2) { background: #aee8fa; }
.w21 { width: 21px; } .w22 { width: 22px; } .w38 { width: 38px; } .w41 { width: 41px; } .w45 { width: 45px; } .w69 { width: 69px; } .w73 { width: 73px; } .w82 { width: 82px; } .w120 { width: 120px; } .w126 { width: 126px; } .w127 { width: 127px; } .w140 { width: 140px; }
.w220 { width: 220px; }
.grid td.focus { border: 2px solid #777; padding: 0; line-height: 14px; }
.node { display: flex; align-items: center; height: 18px; }
.items .node { margin-left: -1px; }
.node span { margin-left: 3px; }
.toggle { width: 12px; height: 12px; border: 1px solid #888; background: #fff; font: 12px/9px "DejaVu Sans Mono", monospace; flex: none; }
.lv0 { margin-left: 2px; }
.hscroll { display: flex; height: 14px; background: #e1e1e1; }
.main-scroll { margin-top: 151px; }
.thumb { flex: 1; background: #ccc; }
.thumb.part { flex: none; width: 485px; }
.arrow { display: flex; align-items: center; justify-content: center; width: 15px; flex: none; background: #fff; border: 1px solid #ccc; }
.arrow::before { content: ""; border: 4px solid transparent; }
.left::before { border-right-color: #666a75; border-left: 0; }
.up::before { border-width: 0 5px 5px; border-bottom-color: #666a75; }
.down::before { border-width: 5px 5px 0; border-top-color: #666a75; }
.grid td.editing { border: 1px solid #36a5d3; padding: 0 0 0 1px; }
.editor { display: flex; align-items: center; gap: 3px; height: 16px; }
.editor input { width: 97px; height: 13px; background: #a4c2ea; color: #3f5878; }
.editor button { display: flex; align-items: center; justify-content: center; width: 22px; height: 14px; border: 1px solid #e59a5c; border-radius: 2px; background: #f4f7fb; flex: none; }

.status { display: flex; height: 8px; background: #f0f0f0; border-top: 1px solid #aeaeae; padding-top: 2px; }
.status span { border-right: 1px solid #9aa0aa; flex: none; height: 5px; }
.s1 { width: 68px; } .s2 { width: 240px; } .s3 { width: 247px; } .s4 { width: 91px; } .s5 { width: 120px; }
.status button { width: 80px; margin-left: 26px; background: #43b6e4; border: 1px solid #2a9aca; border-bottom: 0; }
.s6 { width: 222px; }

.dialog { position: absolute; left: 461px; right: 0; top: 145px; background: #f1f1f1; border: solid #a5a5a5; border-width: 1px 0 1px 1px; }
.dialog-title { display: flex; align-items: center; gap: 6px; height: 30px; background: #03a9f1; color: #fff; padding: 0 8px 0 12px; }
.dialog-title h2 { font-size: 12px; }
.dialog-title .icon-btn { margin-left: auto; }
.dialog-bar { display: flex; align-items: center; gap: 6px; height: 31px; border-bottom: 1px solid #7dc36b; }
.dialog-bar .tabs { margin: 0 auto 0 0; height: 30px; border: 0; }
.dialog-bar .tab { background: #fff; }
.dialog-bar .green .tab.on { width: 68px; }
.push { width: 85px; height: 25px; border: 1px solid #aaa; flex: none; }
.push:last-child { margin-right: -31px; }
.dialog-body { display: flex; gap: 3px; height: 456px; padding: 4px 0 4px 4px; }
.finder { width: 236px; display: flex; flex-direction: column; gap: 3px; flex: none; }
.combo { display: flex; align-items: center; height: 22px; border: 1px solid #a5a5a5; background: #fff; padding-right: 5px; }
.combo select { flex: 1; min-width: 0; appearance: none; padding-left: 3px; height: 20px; }
.search { height: 22px; border: 1px solid #a5a5a5; background: #fff; padding-left: 3px; }
.search::placeholder { color: #888; }
.tree { flex: 1; min-height: 0; display: flex; border: 1px solid #7f8694; background: #fff; overflow: hidden; }
.tree ul { flex: 1; min-width: 0; list-style: none; line-height: 21px; white-space: nowrap; }
.tree li { height: 21px; padding-left: 42px; }
.tree li.cur { color: #0b8ef0; }
.tree li.parent { display: flex; align-items: center; gap: 9px; padding-left: 6px; }
.vscroll { width: 17px; display: flex; flex-direction: column; flex: none; }
.vscroll .arrow { width: 17px; height: 17px; border-color: #999; }
.track { flex: 1; background: #d2d2d2; padding-top: 60px; }
.vthumb { height: 91px; background: #fff; border: 1px solid #999; }
.results { flex: 1; min-width: 0; display: flex; flex-direction: column; border: solid #7f8694; border-width: 1px 0 1px 1px; }
.rows { flex: 1; min-height: 0; overflow: hidden; background: #fff; }
.result th { height: 20px; line-height: 17px; }
.result td { height: 26px; border-color: #d0d0d0; background: #fffffa; }
.result td:first-child, .result td:nth-child(5) { text-align: center; padding: 0; }
.result td:nth-child(n+6) { text-align: right; padding-right: 2px; }
.result td:nth-child(4) { padding-left: 2px; background: #fff; }
.result td.chosen { border: 2px solid #36a5d3; padding: 0; }

.marks { position: absolute; left: 745px; top: 180px; }
.note { position: absolute; left: 679px; top: 159px; font: 300 29px/40px "Noto Sans CJK SC", sans-serif; white-space: nowrap; }
```
